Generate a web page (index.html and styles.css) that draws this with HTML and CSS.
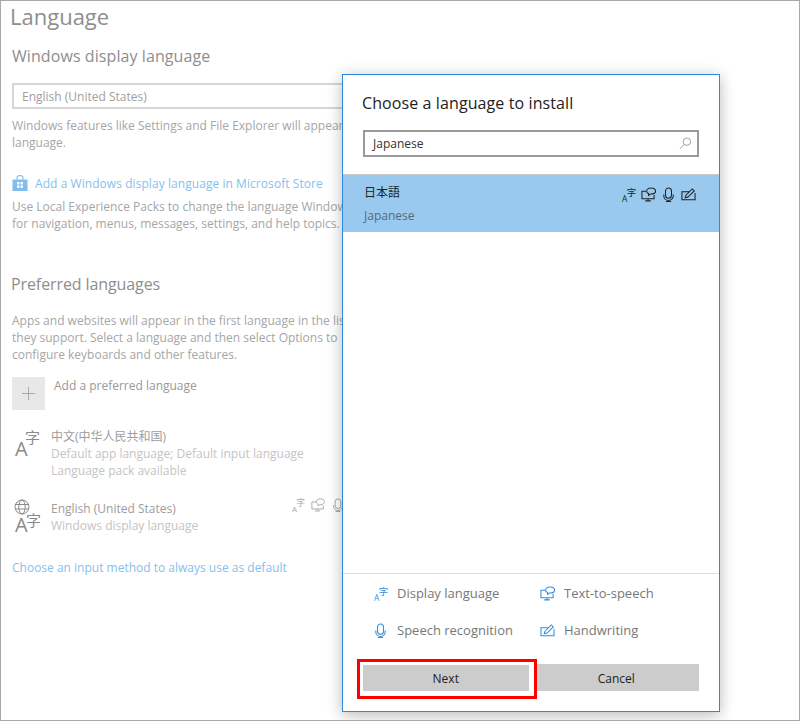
FILE: index.html
```html
<!DOCTYPE html>
<html lang="en">
<head>
<meta charset="utf-8">
<title>Language</title>
<link rel="stylesheet" href="styles.css">
</head>
<body>
<svg class="defs" width="0" height="0" aria-hidden="true">
  <symbol id="i-lang" viewBox="0 0 16 16">
    <text x="1" y="15.500" class="g-a">A</text>
    <text x="6" y="9.500" class="g-z">字</text>
  </symbol>
  <symbol id="i-tts" viewBox="0 0 16 16" fill="none" stroke="currentColor" stroke-width="1.100">
    <path d="M5.500 4.500H1v8h13V8.500M7.500 12.500v2M4.500 14.800h6"/>
    <path d="M6 4.500C6 2.500 8 1 10.800 1S15.500 2.500 15.500 4.300s-1.900 3.200-4.500 3.200H10L8 9V7C6.800 6.500 6 5.600 6 4.500z"/>
  </symbol>
  <symbol id="i-mic" viewBox="0 0 16 16" fill="none" stroke="currentColor" stroke-width="1.100">
    <rect x="4.800" y="1" width="6.400" height="11" rx="3.200"/>
    <path d="M3 8v1.500a5 4.800 0 0 0 10 0V8M8 14.300v1.200M5.200 15.500h5.600"/>
  </symbol>
  <symbol id="i-hand" viewBox="0 0 16 16" fill="none" stroke="currentColor" stroke-width="1.100">
    <path d="M9 5H1v8.500h14V6.500"/>
    <path d="M4.500 11.500l.8-2.800L12 2l2.200 2.200-6.800 6.600z"/>
  </symbol>
</svg>

<div class="page">
  <main class="settings">
    <h1 class="title">Language</h1>
    <h2 class="section">Windows display language</h2>
    <div class="select">English (United States)</div>
    <p class="copy copy-a">Windows features like Settings and File Explorer will appear in this<br>language.</p>
    <div class="store">
      <svg class="bag" viewBox="0 0 16 16" width="16" height="16" aria-hidden="true">
        <path class="bag-h" d="M5 4.500V3a3 2.500 0 0 1 6 0v1.500" fill="none" stroke-width="1.200"/>
        <path class="bag-b" d="M0.500 4.500h15v11.500H.5zM5 7v2.400h2.500V7zM8.500 7v2.400H11V7zM5 10.400v2.400h2.500v-2.400zM8.500 10.400v2.400H11v-2.400z" fill-rule="evenodd"/>
      </svg>
      <a class="link link-store">Add a Windows display language in Microsoft Store</a>
    </div>
    <p class="copy copy-b">Use Local Experience Packs to change the language Windows uses<br>for navigation, menus, messages, settings, and help topics.</p>

    <h2 class="section section-b">Preferred languages</h2>
    <p class="copy copy-c">Apps and websites will appear in the first language in the list that<br>they support. Select a language and then select Options to<br>configure keyboards and other features.</p>

    <div class="add">
      <span class="add-tile"><svg viewBox="0 0 13 13" width="13" height="13" aria-hidden="true"><path d="M6.500 0v13M0 6.500h13" stroke="#a9a9a9" stroke-width="1"/></svg></span>
      <span class="add-label">Add a preferred language</span>
    </div>

    <div class="lang lang-zh">
      <span class="lang-icon"><span class="big-a">A</span><span class="big-z">字</span></span>
      <div class="lang-text">
        <div class="lang-name">中文(中华人民共和国)</div>
        <div class="lang-sub">Default app language; Default input language</div>
        <div class="lang-sub">Language pack available</div>
      </div>
    </div>

    <div class="lang lang-en">
      <span class="lang-icon">
        <svg class="globe" viewBox="0 0 16 16" width="16" height="16" aria-hidden="true"><g fill="none" stroke="#8a8a8a" stroke-width="1"><circle cx="8" cy="8" r="7"/><ellipse cx="8" cy="8" rx="3.200" ry="7"/><path d="M1 5.500h14M1 10h14"/></g></svg>
        <span class="big-a">A</span><span class="big-z">字</span>
      </span>
      <div class="lang-text">
        <div class="lang-name">English (United States)</div>
        <div class="lang-sub">Windows display language</div>
      </div>
      <div class="caps caps-muted">
        <svg width="14" height="14"><use href="#i-lang"/></svg>
        <svg width="14" height="14"><use href="#i-tts"/></svg>
        <svg width="14" height="14"><use href="#i-mic"/></svg>
      </div>
    </div>

    <a class="link link-input">Choose an input method to always use as default</a>
  </main>

  <section class="dialog">
    <h2 class="dlg-title">Choose a language to install</h2>
    <div class="search">
      <span class="search-text">Japanese</span>
      <svg viewBox="0 0 14 14" width="13" height="13" aria-hidden="true"><g fill="none" stroke="#9a9a9a" stroke-width="1"><circle cx="8.500" cy="5" r="4"/><path d="M5.500 8L1 12.800"/></g></svg>
    </div>
    <div class="result">
      <div class="result-text">
        <div class="result-name">日本語</div>
        <div class="result-sub">Japanese</div>
      </div>
      <div class="caps caps-dark">
        <svg width="15" height="15"><use href="#i-lang"/></svg>
        <svg width="15" height="15"><use href="#i-tts"/></svg>
        <svg width="15" height="15"><use href="#i-mic"/></svg>
        <svg width="15" height="15"><use href="#i-hand"/></svg>
      </div>
    </div>
    <div class="list-space"></div>
    <div class="legend">
      <div class="legend-item"><svg width="15" height="15"><use href="#i-lang"/></svg><span>Display language</span></div>
      <div class="legend-item"><svg width="15" height="15"><use href="#i-tts"/></svg><span>Text-to-speech</span></div>
      <div class="legend-item"><svg width="15" height="15"><use href="#i-mic"/></svg><span>Speech recognition</span></div>
      <div class="legend-item"><svg width="15" height="15"><use href="#i-hand"/></svg><span>Handwriting</span></div>
    </div>
    <div class="buttons">
      <button class="btn btn-next">Next</button>
      <button class="btn">Cancel</button>
    </div>
    <div class="highlight"></div>
  </section>
</div>
</body>
</html>
```
FILE: styles.css
```css
* { box-sizing: border-box; }
html, body { margin: 0; padding: 0; background: #fff; }
body { width: 800px; height: 721px; overflow: hidden; font-family: "Open Sans", "Noto Sans CJK SC", sans-serif; }
.defs { position: absolute; }
.g-a { font: 9px "Open Sans", sans-serif; fill: currentColor; }
.g-z { font: 10px "Noto Sans CJK SC", sans-serif; fill: currentColor; }

.page { position: relative; width: 800px; height: 721px; border: 1px solid #a8a8a8; overflow: hidden; }

.settings { padding: 0 0 0 11px; white-space: nowrap; color: #a3a3a3; font-size: 12px; }
.title { margin: 0 0 0 -2px; font-size: 22px; font-weight: 400; line-height: 30px; color: #8e8e8e; }
.section { margin: 13px 0 0; font-size: 16px; font-weight: 400; line-height: 24px; color: #8e8e8e; letter-spacing: .08px; }
.section-b { margin: 40px 0 0 -1px; letter-spacing: -.1px; }
.select { margin-top: 15px; width: 400px; height: 26px; border: 2px solid #d6d6d6; padding-left: 8px; line-height: 23px; color: #a0a0a0; }
.copy { margin: 0; line-height: 17px; color: #a6a6a6; }
.copy-a { margin-top: 8px; }
.store { display: flex; align-items: center; gap: 7px; margin-top: 23px; height: 18px; }
.bag { flex: none; }
.bag-h { stroke: #7fbdec; }
.bag-b { fill: #7fbdec; }
.link { color: #86c1ee; font-size: 12px; }
.link-store { letter-spacing: .06px; }
.copy-b { margin-top: 6px; }
.copy-c { margin-top: 16px; }

.add { display: flex; margin-top: 14px; height: 33px; }
.add-tile { width: 33px; height: 33px; background: #e8e8e8; display: flex; align-items: center; justify-content: center; }
.add-label { margin: 0 0 0 9px; line-height: 18px; color: #999; }

.lang { display: flex; position: relative; color: #bbb; }
.lang-zh { margin-top: 18px; }
.lang-en { margin-top: 21px; }
.lang-icon { position: relative; flex: none; width: 39px; height: 34px; color: #8a8a8a; }
.big-a { position: absolute; left: 3px; top: 9px; font-size: 20px; line-height: 24px; }
.big-z { position: absolute; left: 13px; top: -1px; font-family: "Noto Sans CJK SC", sans-serif; font-size: 15px; line-height: 20px; }
.lang-en .big-z { top: 10px; left: 14px; }
.lang-en .big-a { top: 13px; }
.globe { position: absolute; left: 2px; top: -1px; }
.lang-text { line-height: 17px; }
.lang-name { color: #9d9d9d; }
.lang-sub { color: #c4c4c4; }

.caps { display: flex; }
.caps-muted { position: absolute; left: 279px; top: -2px; gap: 6px; color: #a8a8a8; }
.caps-dark { gap: 5px; color: #222; margin-top: 12px; }

.link-input { display: block; margin-top: 25px; }

.dialog { position: absolute; left: 341px; top: 73px; width: 378px; height: 638px; background: #fff; border: 1px solid #2b8ae0; box-shadow: 0 3px 14px rgba(0,0,0,.28); display: flex; flex-direction: column; color: #222; font-size: 12px; }
.dlg-title { margin: 16px 0 0 19px; font-size: 16px; font-weight: 400; line-height: 24px; color: #222; letter-spacing: .1px; }
.search { display: flex; align-items: center; justify-content: space-between; margin: 15px 20px 0; height: 27px; border: 2px solid #9a9a9a; padding: 0 5px 0 8px; }
.search-text { color: #333; }
.result { display: flex; justify-content: space-between; height: 58px; margin-top: 17px; background: #99c9ef; border-top: 1px solid #c8c8c8; padding: 0 23px 0 21px; }
.result-name { margin-top: 7px; line-height: 20px; font-family: "Noto Sans CJK JP", sans-serif; font-size: 12px; color: #222; }
.result-sub { margin-top: 5px; line-height: 18px; color: #55697a; }
.list-space { flex: 1; }
.legend { display: grid; grid-template-columns: 167px 1fr; grid-auto-rows: 18px; align-content: start; row-gap: 19px; padding: 10px 0 0 30px; border-top: 1px solid #ddd; height: 91px; color: #777; font-size: 13px; }
.legend-item { display: flex; align-items: center; gap: 9px; height: 18px; }
.legend-item svg { color: #2f8fe0; flex: none; }
.buttons { display: flex; gap: 5px; margin: 0 20px 20px; }
.btn { flex: 1; height: 27px; border: 0; padding: 1px 0 0; background: #ccc; color: #222; font: 12px "Open Sans", sans-serif; }
.highlight { position: absolute; left: 14px; top: 584px; width: 180px; height: 40px; border: 3px solid #f00; box-shadow: inset 0 0 0 3px #fff; pointer-events: none; }
```
